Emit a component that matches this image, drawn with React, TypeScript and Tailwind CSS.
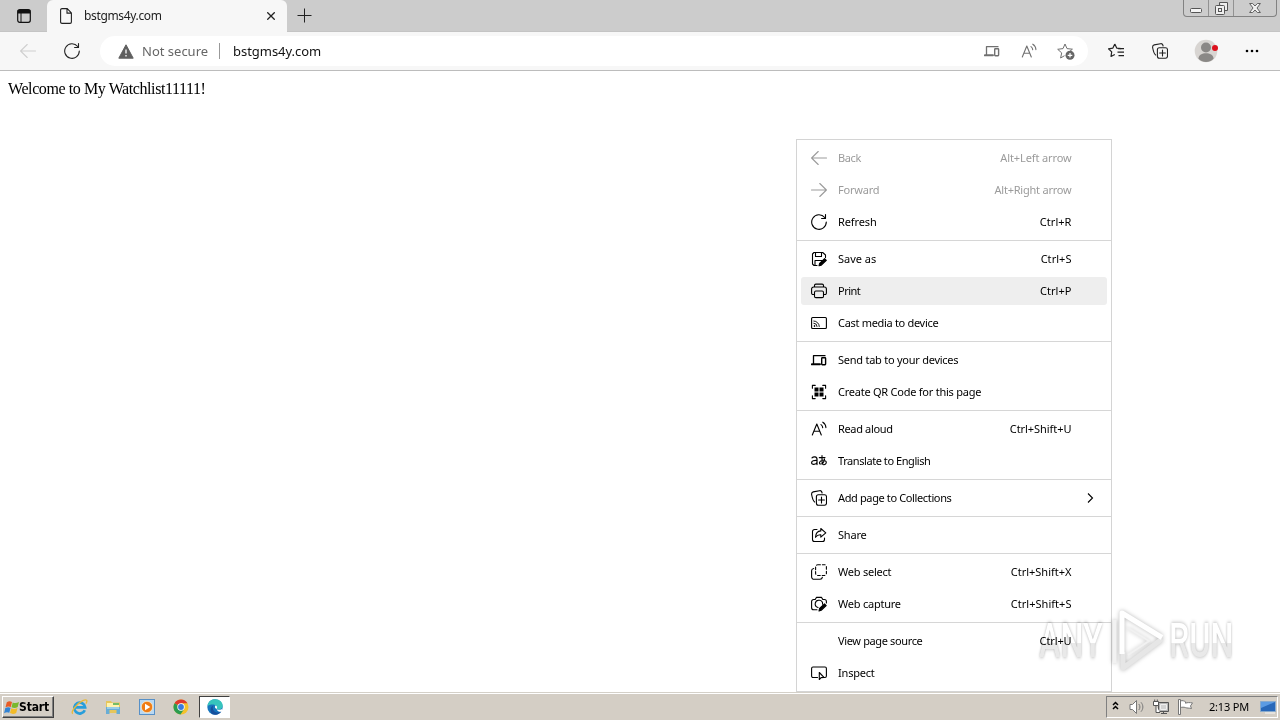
import type { ReactNode } from "react";

type IconProps = { className?: string };

function Glyph({ className = "", children }: { className?: string; children: ReactNode }) {
  return (
    <svg
      viewBox="0 0 16 16"
      fill="none"
      stroke="currentColor"
      strokeWidth="1.1"
      strokeLinecap="round"
      strokeLinejoin="round"
      className={`h-4 w-4 shrink-0 ${className}`}
    >
      {children}
    </svg>
  );
}

const BackIcon = ({ className }: IconProps) => (
  <Glyph className={className}>
    <path d="M15.5 8H.8M7.2 1.5L.6 8l6.6 6.5" />
  </Glyph>
);

const ForwardIcon = () => (
  <Glyph>
    <path d="M.5 8h14.7M8.8 1.5L15.4 8l-6.6 6.5" />
  </Glyph>
);

const RefreshIcon = ({ className }: IconProps) => (
  <Glyph className={className}>
    <path d="M15.3 8A7.3 7.3 0 1 1 13.7 3.5M14.5.6v3.9h-3.9" />
  </Glyph>
);

const SaveIcon = () => (
  <Glyph>
    <path d="M6 14.5H3L1.5 13V3L3 1.5h8.7L14.5 4v2.5M4.5 1.5v4h6v-4M4 14.5v-5h7" />
    <path d="M8 14.8l.6-2.4 5-4.8 1.7 1.8-5 4.8z" fill="currentColor" />
  </Glyph>
);

const PrintIcon = () => (
  <Glyph>
    <path d="M3.5 11.5H2A1.4 1.4 0 0 1 .6 10V6A2 2 0 0 1 2.6 4h10.8a2 2 0 0 1 2 2v4a1.4 1.4 0 0 1-1.4 1.5h-1.5M3.5 4V2.5c0-.8.6-1.4 1.4-1.4h6.2c.8 0 1.4.6 1.4 1.4V4" />
    <rect x="3.5" y="8" width="9" height="6.6" rx="1.4" />
  </Glyph>
);

const CastIcon = () => (
  <Glyph>
    <rect x=".6" y="2.5" width="14.8" height="11" rx="1" />
    <g strokeWidth=".9">
      <path d="M2.8 6a5.5 5.5 0 0 1 5.5 5.5M2.8 8.2a3.3 3.3 0 0 1 3.3 3.3" />
      <circle cx="3.3" cy="11" r=".4" fill="currentColor" />
    </g>
  </Glyph>
);

const DevicesIcon = ({ className }: IconProps) => (
  <Glyph className={className}>
    <path d="M2.500 11.500V3.700h11.500" strokeWidth="1.300" />
    <path d="M.8 12.300h8.200" strokeWidth="1.900" />
    <rect x="10.700" y="5.800" width="3.900" height="6.900" rx=".6" strokeWidth="1.400" />
  </Glyph>
);

const QrIcon = () => (
  <Glyph>
    <path d="M1.4 4.2V1.4h2.8M11.8 1.4h2.8v2.8M14.6 11.8v2.8h-2.8M4.2 14.6H1.4v-2.8" strokeWidth="1.1" />
    <g fill="currentColor" stroke="none">
      <rect x="3.5" y="3.5" width="4" height="4" />
      <rect x="8.500" y="3.5" width="4" height="4" />
      <rect x="3.5" y="8.500" width="4" height="4" />
      <rect x="8.500" y="8.500" width="4" height="4" />
    </g>
  </Glyph>
);

const ReadAloudIcon = ({ className }: IconProps) => (
  <Glyph className={className}>
    <path d="M1.3 14L5.8 3l4.5 11M2.8 10.3h6M10 3.6c1 .7 1.6 1.7 1.7 3M11.8 1.2c2 1.2 3 3 3.1 5.4" />
  </Glyph>
);

const TranslateIcon = () => (
  <Glyph>
    <path d="M1 4.800c1.200-1.300 5-1.700 5 1.400v5.400M6 7.400C3 7.200.6 7.900.6 9.700c0 2.400 4.200 2.200 5.400-.2" strokeWidth="1.2" />
    <path d="M8.300 4.600H14M11 2.600v5.900c0 1 .3 2 .9 2.900M13.500 6.100c-.5 2.600-2.300 4.900-4 4.900-1.800 0-1.400-3.400 2.300-3.700 4.600-.3 4.400 4.200.9 4.400" strokeWidth="1.1" />
  </Glyph>
);

const CollectionsIcon = ({ className }: IconProps) => (
  <Glyph className={className}>
    <path d="M3.600 12C2.200 11 1.200 7.500.7 5 .3 3 1 2.200 2.200 1.900L8.500.7c1.200-.2 2 .3 2.300 1.300l.3 1" />
    <rect x="5.400" y="4.800" width="10.100" height="10.400" rx="2" />
    <path d="M10.500 7.100v5.800M7.600 10h5.800" />
  </Glyph>
);

const ShareIcon = () => (
  <Glyph>
    <path d="M6 2.500H3.500a2 2 0 0 0-2 2v8a2 2 0 0 0 2 2h8a2 2 0 0 0 2-2V11" />
    <path d="M9.800 1.500l5 4.300-5 4.300V7.800C7.300 7.600 5.800 8.500 4.500 10.300 4.700 6.500 6.600 4.100 9.800 3.900z" />
  </Glyph>
);

const SelectIcon = () => (
  <Glyph>
    <path d="M2.700 4.500C1.400 4.700.6 5.400.6 6.800v6a2.500 2.500 0 0 0 2.500 2.500H9c1.400 0 2.200-.8 2.400-2.100" />
    <rect x="4.600" y=".7" width="10.800" height="10.800" rx="2.200" strokeDasharray="2.600 2" />
  </Glyph>
);

const CaptureIcon = () => (
  <Glyph>
    <path d="M6 13.800H2.600a2 2 0 0 1-2-2V5.500a2 2 0 0 1 2-2h1.600l1.200-2.100h5.200l1.200 2.100h1.600a2 2 0 0 1 2 2V7" />
    <path d="M7 11.500a3.700 3.700 0 1 1 4.600-3.300" />
    <path d="M8 15l.5-2.500 5-4.600 1.700 1.700-5 4.700z" fill="currentColor" />
  </Glyph>
);

const InspectIcon = () => (
  <Glyph>
    <path d="M6.500 12.500H2a1.400 1.400 0 0 1-1.400-1.400V3.400C.6 2.600 1.200 2 2 2h12c.8 0 1.400.6 1.400 1.400v7.700c0 .8-.6 1.400-1.400 1.400h-.7" />
    <path d="M8.300 7.500v7l1.800-1.900 2.900-.2z" />
  </Glyph>
);

const Star = "M6.800 1l1.900 4.100 4.500.6M6.800 1L4.900 5.100l-4.400.7 3.200 3.100L3 13.500l3.800-2";

type Item = {
  label: string;
  keys?: string;
  icon?: ReactNode;
  disabled?: boolean;
  active?: boolean;
  submenu?: boolean;
  track?: string;
  keysTrack?: string;
};

const menu: Item[][] = [
  [
    { label: "Back", keys: "Alt+Left arrow", icon: <BackIcon />, disabled: true, track: "tracking-[-0.4px]" },
    { label: "Forward", keys: "Alt+Right arrow", icon: <ForwardIcon />, disabled: true, keysTrack: "tracking-[-0.22px]" },
    { label: "Refresh", keys: "Ctrl+R", icon: <RefreshIcon />, track: "tracking-[-0.12px]", keysTrack: "tracking-[0.04px]" },
  ],
  [
    { label: "Save as", keys: "Ctrl+S", icon: <SaveIcon />, track: "tracking-[0px]", keysTrack: "tracking-[0.04px]" },
    { label: "Print", keys: "Ctrl+P", icon: <PrintIcon />, active: true, track: "tracking-[-0.5px]", keysTrack: "tracking-[0.04px]" },
    { label: "Cast media to device", icon: <CastIcon />, track: "tracking-[-0.31px]" },
  ],
  [
    { label: "Send tab to your devices", icon: <DevicesIcon />, track: "tracking-[-0.25px]" },
    { label: "Create QR Code for this page", icon: <QrIcon />, track: "tracking-[-0.24px]" },
  ],
  [
    { label: "Read aloud", keys: "Ctrl+Shift+U", icon: <ReadAloudIcon />, track: "tracking-[-0.35px]", keysTrack: "tracking-[-0.05px]" },
    { label: "Translate to English", icon: <TranslateIcon />, track: "tracking-[-0.43px]" },
  ],
  [{ label: "Add page to Collections", icon: <CollectionsIcon />, submenu: true, track: "tracking-[-0.37px]" }],
  [{ label: "Share", icon: <ShareIcon /> }],
  [
    { label: "Web select", keys: "Ctrl+Shift+X", icon: <SelectIcon />, track: "tracking-[-0.23px]", keysTrack: "tracking-[0px]" },
    { label: "Web capture", keys: "Ctrl+Shift+S", icon: <CaptureIcon />, track: "tracking-[-0.23px]", keysTrack: "tracking-[0.03px]" },
  ],
  [
    { label: "View page source", keys: "Ctrl+U", track: "tracking-[-0.36px]" },
    { label: "Inspect", icon: <InspectIcon /> },
  ],
];

function MenuRow({
  label,
  keys,
  icon,
  disabled,
  active,
  submenu,
  track = "tracking-[-0.2px]",
  keysTrack = "tracking-[-0.12px]",
}: Item) {
  return (
    <div className={`h-8 px-1 py-0.5 ${disabled ? "text-[#9b9b9b]" : "text-black"}`}>
      <div className={`flex h-7 items-center rounded-[3px] pl-2.5 ${active ? "bg-[#eeeeee]" : ""}`}>
        <span className="h-4 w-[27px] shrink-0">{icon}</span>
        <span className={`flex-1 whitespace-nowrap ${track}`}>{label}</span>
        {keys && <span className={`mr-[35.500px] whitespace-nowrap ${keysTrack}`}>{keys}</span>}
        {submenu && (
          <svg viewBox="0 0 8 10" className="mr-3 h-2.5 w-2 fill-none stroke-black" strokeWidth="1.100">
            <path d="M1 .5L5.500 5 1 9.500" />
          </svg>
        )}
      </div>
    </div>
  );
}

function ContextMenu() {
  return (
    <div className="absolute top-[139px] left-[796px] h-[553px] w-[316px] border border-[#d4d4d4] bg-white py-0.5 font-['Noto_Sans',sans-serif] text-[11px] leading-4">
      {menu.map((group, i) => (
        <div key={group[0].label}>
          {i > 0 && <div className="my-0.5 h-px bg-[#d6d6d6]" />}
          {group.map((item) => (
            <MenuRow key={item.label} {...item} />
          ))}
        </div>
      ))}
    </div>
  );
}

function TabStrip() {
  return (
    <div className="flex h-8 border-b border-[#c4c4c4] bg-[#cccccc]">
      <div className="flex w-[47px] items-center justify-center">
        <svg viewBox="0 0 14 14" className="h-3.5 w-3.5">
          <rect x=".7" y=".7" width="12.6" height="12.6" rx="2" fill="none" stroke="#111" strokeWidth="1.200" />
          <path d="M.7 1h12.6v3.500H.7z" fill="#111" />
          <path d="M4 4v9" stroke="#111" />
        </svg>
      </div>
      <div className="flex h-8 w-[240px] items-center rounded-t-md bg-[#f7f7f7] pl-[13px]">
        <svg viewBox="0 0 12 16" className="h-4 w-3 fill-none stroke-[#222]" strokeWidth="1.100">
          <path d="M2 .6h5.200l4.200 4.300v9.200c0 .8-.5 1.300-1.300 1.300H2c-.8 0-1.400-.5-1.400-1.300V2C.6 1.200 1.200.6 2 .6zM7 .8v4.300h4.200" />
        </svg>
        <span className="ml-3 flex-1 text-[12px] tracking-[-0.35px] text-[#222]">bstgms4y.com</span>
        <svg viewBox="0 0 8 8" className="mr-3 h-2 w-2 stroke-[#222]" strokeWidth="1.300">
          <path d="M.3 .3l7.400 7.400M7.700 .3L.3 7.700" />
        </svg>
      </div>
      <div className="flex flex-1 items-center pl-2.5">
        <svg viewBox="0 0 15 15" className="h-[15px] w-[15px] stroke-[#222]">
          <path d="M7.500 .5v14M.5 7.500h14" />
        </svg>
      </div>
      <div className="mr-[3px] flex h-[17px] w-[94px] rounded-b border border-t-0 border-[#828282]">
        <div className="flex w-[25px] justify-center border-r border-[#929292] pt-2">
          <svg viewBox="0 0 12 5" className="h-[5px] w-3">
            <rect x=".5" y=".5" width="11" height="4" rx="1" fill="#f4f4f4" stroke="#555" />
          </svg>
        </div>
        <div className="flex w-[25px] justify-center border-r border-[#929292] pt-0.5">
          <svg viewBox="0 0 13 13" className="h-[13px] w-[13px]" fill="#eee" stroke="#555">
            <path d="M4.500 .5h8v8h-3M4.500 .5v3" />
            <rect x=".5" y="3.500" width="9" height="9" rx="1" />
            <rect x="3.500" y="6.500" width="3" height="3" />
          </svg>
        </div>
        <div className="flex flex-1 justify-center pt-[3px]">
          <svg viewBox="0 0 12 10" className="h-2.5 w-3" fill="#f1f1f1" stroke="#555" strokeWidth=".9">
            <path d="M.6 .5h3L6 3l2.400-2.500h3L8 5l3.400 4.500h-3L6 7 3.600 9.500h-3L4 5z" />
          </svg>
        </div>
      </div>
    </div>
  );
}

function Toolbar() {
  return (
    <div className="flex h-[39px] items-center border-b border-[#bcbcbc] bg-[#f7f7f7]">
      <BackIcon className="ml-5 text-[#cfcfcf]" />
      <RefreshIcon className="ml-7 text-[#222]" />
      <div className="ml-5 flex h-[30px] w-[988px] items-center rounded-full bg-white text-[#111]">
        <svg viewBox="0 0 16 15" className="ml-[18px] h-[15px] w-4">
          <path d="M8 .8l7.200 13.400H.8z" fill="#606060" stroke="#606060" strokeLinejoin="round" />
          <path d="M8 5.500v4M8 11v1.500" stroke="white" strokeWidth="1.300" />
        </svg>
        <span className="mt-0.5 ml-2 w-[66px] whitespace-nowrap text-[13px] tracking-[0px] text-[#666]">Not secure</span>
        <span className="ml-[11px] h-4 w-px bg-[#999]" />
        <span className="mt-0.5 ml-[13px] flex-1 text-[13px] tracking-[-0.03px]">bstgms4y.com</span>
        <DevicesIcon className="mr-[21px] text-[#707070]" />
        <ReadAloudIcon className="mr-5 text-[#707070]" />
        <svg viewBox="0 0 18 17" className="mr-[13px] h-[17px] w-[18px] fill-none stroke-[#707070]">
          <path d="M8 1l2 4.600 5.400.6L12 9M8 1L6 5.600l-5.300.7 4 3.600L3.600 15 7.500 12.700" />
          <circle cx="13" cy="12.300" r="4.500" fill="#666" stroke="none" />
          <path d="M13 10v4.600M10.700 12.300h4.600" stroke="white" strokeWidth="1.200" />
        </svg>
      </div>
      <svg viewBox="0 0 16 16" className="ml-5 h-4 w-4 fill-none stroke-[#222]" strokeWidth="1.200">
        <path d={Star} strokeLinejoin="round" />
        <path d="M10 5.700h6M9.500 9.200H16M10.500 12.700H16" />
      </svg>
      <CollectionsIcon className="ml-7 text-[#222]" />
      <svg viewBox="0 0 24 24" className="ml-[26px] h-6 w-6">
        <circle cx="12" cy="12" r="11.300" fill="#d8d5d2" />
        <circle cx="12" cy="8.500" r="5" fill="#8a8886" />
        <path d="M4.500 19.500c0-7 15-7 15 0-2.500 4.500-12.500 4.500-15 0z" fill="#8a8886" />
        <circle cx="21" cy="9" r="3" fill="#dc101c" />
      </svg>
      <svg viewBox="0 0 14 4" className="ml-[27px] h-1 w-3.5 fill-black">
        <circle cx="2" cy="2" r="1.300" />
        <circle cx="7" cy="2" r="1.300" />
        <circle cx="12" cy="2" r="1.300" />
      </svg>
    </div>
  );
}

function WatermarkWord({ children }: { children: string }) {
  return (
    <span className="inline-block origin-left scale-x-[0.66] bg-linear-to-b from-white from-55% to-[#e9e9e9] to-55% bg-clip-text text-transparent drop-shadow-[0_0_2px_rgba(0,0,0,0.32)]">
      {children}
    </span>
  );
}

function Watermark() {
  return (
    <div className="absolute top-[608px] left-[1039px] flex h-16 w-[200px] items-center font-['Roboto',sans-serif] text-[49px] leading-none font-medium mix-blend-multiply">
      <div className="w-[64px] shrink-0">
        <WatermarkWord>ANY</WatermarkWord>
      </div>
      <svg
        viewBox="0 0 64 64"
        className="h-16 w-16 shrink-0 fill-none drop-shadow-[0_0_2px_rgba(0,0,0,0.28)]"
        strokeLinejoin="round"
      >
        <path d="M11.500 12v43" stroke="#f2f2f2" strokeWidth="4" />
        <path d="M20 44v16L59 31" stroke="#e6e6e6" strokeWidth="5" />
        <path d="M19 46V5l40 24.500" stroke="white" strokeWidth="5" />
        <path d="M25 20l21 13-21 14" stroke="#f1f1f1" strokeWidth="2" />
      </svg>
      <div className="ml-0.5 w-[64px] shrink-0">
        <WatermarkWord>RUN</WatermarkWord>
      </div>
    </div>
  );
}

function Taskbar() {
  return (
    <div className="flex h-7 items-start border-t border-[#d4d0c8] bg-[#d4cec5] pt-[3px] font-['Noto_Sans',sans-serif] shadow-[inset_0_1px_0_white]">
      <div className="ml-0.5 flex h-[22px] w-[52px] items-center border border-t-white border-r-[#404040] border-b-[#404040] border-l-white shadow-[inset_-1px_-1px_0_#808080]">
        <svg viewBox="0 0 16 15" className="ml-px h-[15px] w-4 shrink-0">
          <path d="M2.800 2.200C5 .8 6.500 1.300 8 2L6.800 7C5.200 6.200 3.500 6.100 1.500 7.300z" fill="#e85b25" />
          <path d="M8.700 2.400c2 .9 4 .8 6.300-.5l-1.300 5.200c-2.100 1.200-4.200 1.200-6.200.1z" fill="#79b82c" />
          <path d="M1.300 8.100c2-1.200 3.600-1.100 5.300-.3l-1.300 5C3.700 12 2 12 .1 13.200z" fill="#3283d4" />
          <path d="M7.300 8.200c2 1 4 1 6.200-.2l-1.300 5c-2.200 1.200-4.200 1.200-6.200.1z" fill="#f3bb28" />
        </svg>
        <span className="-ml-px font-['DejaVu_Sans_Condensed','DejaVu_Sans',sans-serif] text-[12px] font-bold tracking-[-0.15px] text-black">
          Start
        </span>
      </div>
      <div className="ml-[17px] flex h-[22px] items-center">
        <svg viewBox="0 0 18 18" className="h-[17px] w-[17px] fill-none">
          <path d="M14.600 11.800A5.800 5.800 0 1 1 15 8.900H5" stroke="#279edb" strokeWidth="2.800" />
          <path d="M2 15.500C-1 14 6 5 12.500 1.800 16.500-.2 18 1.500 15.800 4.800" stroke="#e8b938" strokeWidth="1.400" />
        </svg>
        <svg viewBox="0 0 16 16" className="ml-[17px] h-4 w-4">
          <path d="M1 2h5l1 1.500h8V14H1z" fill="#e6c65b" />
          <path d="M2 4h12v5H2z" fill="#fff3af" />
          <path d="M8 4h6v2H8z" fill="#75bd66" />
          <path d="M1 8h14v7h-3.500v-4h-7v4H1z" fill="#68add6" />
          <path d="M2 9h12" stroke="#c9edfb" />
        </svg>
        <svg viewBox="0 0 16 16" className="ml-[18px] h-4 w-4">
          <rect x=".5" y=".5" width="15" height="15" fill="#b9d8f2" stroke="#5790c7" />
          <circle cx="8" cy="8" r="5.700" fill="#ef7c15" stroke="#fff0ce" strokeWidth=".7" />
          <path d="M6 4.800v6.400L11.300 8z" fill="white" />
        </svg>
        <svg viewBox="0 0 16 16" className="ml-[18px] h-4 w-4">
          <circle cx="8" cy="8" r="7.500" fill="#f4c22b" />
          <path d="M8 8L1.500 4.200A7.500 7.500 0 0 1 14.500 4.300H8z" fill="#df392d" />
          <path d="M8 8L1.500 4.200A7.500 7.500 0 0 0 7.500 15.500L11.200 10z" fill="#2b9c50" />
          <circle cx="8" cy="8" r="3.700" fill="white" />
          <circle cx="8" cy="8" r="2.900" fill="#3b7bdd" />
        </svg>
        <div className="ml-2.5 flex h-[22px] w-[31px] items-center justify-center border border-t-[#404040] border-r-white border-b-white border-l-[#404040] bg-white">
          <svg viewBox="0 0 16 16" className="h-4 w-4">
            <circle cx="8" cy="8" r="7.700" fill="#1675bd" />
            <path d="M.5 7C1 2.800 4 .3 8 .3c5 0 7.700 3.200 7.700 6.400 0 3-3 4.500-6 3.500 1.500-3.500-3-6.500-9.200-3.200z" fill="#37c5bd" />
            <path d="M6.500 6.500C5 8 5.600 12 9 13.200c2 .7 4 .2 5.600-.9A7.800 7.800 0 0 1 5 15C2.800 12 3 8 6.500 6.500z" fill="#174f9c" />
            <path d="M9.700 10.200C7 8.600 8.200 7.300 8.300 6.500c3 .7 1.400 2.700 1.400 3.700 1.700 1.200 4.600.6 5.500-.4v2.600c-2 1-4.700.2-5.500-2.200z" fill="white" />
          </svg>
        </div>
      </div>
      <div className="mr-0.5 ml-auto flex h-[22px] w-[172px] items-center border border-t-[#808080] border-r-white border-b-white border-l-[#808080] pl-[5px]">
        <svg viewBox="0 0 7 9" className="mb-1 h-[9px] w-[7px] fill-none stroke-black" strokeWidth="1.500">
          <path d="M1 4l2.500-2.500L6 4M1 8l2.500-2.500L6 8" />
        </svg>
        <svg viewBox="0 0 16 16" className="ml-2.5 h-4 w-4 fill-white stroke-[#777]">
          <path d="M1 5.500h2.500l4-4v13l-4-4H1z" />
          <path d="M9.800 5c1.500 2 1.500 4 0 6M12 3.300c2.500 3 2.500 6.400 0 9.400" fill="none" />
        </svg>
        <svg viewBox="0 0 16 16" className="ml-2 h-4 w-4 fill-white stroke-[#555]">
          <path d="M5.500 3.500h10v9h-10z" fill="#b5b5b5" />
          <path d="M7.500 5.500h6v5h-6z" fill="#d2d2d2" stroke="#eee" />
          <path d="M8 14.500h6M10.500 12.500v2" />
          <path d="M.5 2.500h5v4h-5zM1.700 .5v2M4.300 .5v2M3 6.500v7h4" />
        </svg>
        <svg viewBox="0 0 17 16" className="ml-2 h-4 w-[17px] fill-white stroke-[#777]">
          <path d="M1.500 .5h2v15h-2zM3.500 2c2-1 4 .2 5 .8v1.400c2-.8 4-.7 7-.3l-2 3 1 2.600c-2.500-.5-4.500-.3-6-.9-2-.7-3-.3-5-.2z" />
        </svg>
        <span className="ml-[15px] whitespace-nowrap text-[11px] tracking-[-0.2px] text-black">2:13 PM</span>
        <svg viewBox="0 0 16 14" className="mr-px ml-auto h-3.5 w-4">
          <path d="M.5 1.500h15v10H.5z" fill="#2868b9" stroke="#88aacd" />
          <path d="M1 2h14L1 8z" fill="#5b9be3" />
          <path d="M5 13h10" stroke="#f5f5f5" />
        </svg>
      </div>
    </div>
  );
}

export default function App() {
  return (
    <div className="relative flex h-[720px] w-[1280px] flex-col overflow-hidden bg-white font-['Noto_Sans',sans-serif]">
      <TabStrip />
      <Toolbar />
      <main className="flex-1 px-2 pt-[9px] font-['Liberation_Serif',serif] text-[16px] leading-[18px] tracking-[-0.41px] text-black">
        Welcome to My Watchlist11111!
      </main>
      <Taskbar />
      <ContextMenu />
      <Watermark />
    </div>
  );
}
